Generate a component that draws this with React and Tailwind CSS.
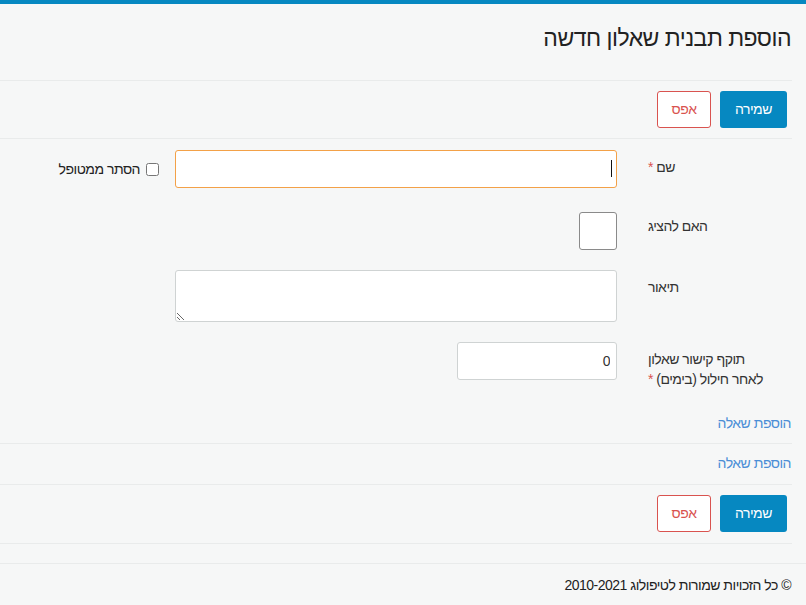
export default function App() {
  return (
    <div
      dir="rtl"
      className="min-h-screen bg-[#f6f7f7] text-[14px] tracking-[-0.5px] text-[#333]"
      style={{ fontFamily: '"Liberation Sans", Arial, sans-serif' }}
    >
      <div className="h-[4px] bg-[#0688c1]" />

      <div className="pr-[14px]">
        {/* header */}
        <div className="h-[76px] pt-[20px] pr-[1px]">
          <h1 className="text-[23px] leading-[28px] text-[#222]">הוספת תבנית שאלון חדשה</h1>
        </div>

        <div className="border-t border-[#e9ebeb] py-[10px] pr-[5px]">
          <div className="flex gap-[9px]">
            <button className="w-[67px] h-[37px] rounded-[3px] bg-[#0688c1] text-white text-[14px]">
              שמירה
            </button>
            <button className="w-[54px] h-[37px] rounded-[3px] border border-[#d9534f] bg-white text-[#d9534f] text-[14px]">
              אפס
            </button>
          </div>
        </div>

        {/* form */}
        <div className="border-t border-[#e9ebeb] pt-[11px]">
          {/* name */}
          <div className="flex">
            <label className="w-[175px] pl-[31px] pt-[7px] leading-[20px] text-left">
              שם <span className="text-[#d9534f]">*</span>
            </label>
            <div className="relative w-[442px]">
              <input
                type="text"
                className="w-full h-[38px] rounded-[3px] border border-[#f3a148] bg-white px-3 outline-none"
              />
              <div className="absolute right-[5px] top-[10px] w-[1px] h-[17px] bg-[#111]" />
            </div>
            <div className="flex items-center gap-[6px] pr-[16px] h-[38px]">
              <input type="checkbox" className="w-[13px] h-[13px] m-0" />
              <span className="text-[#222]">הסתר ממטופל</span>
            </div>
          </div>

          {/* show */}
          <div className="flex mt-[24px]">
            <label className="w-[175px] pl-[31px] pt-[4px] leading-[20px] text-left">האם להציג</label>
            <div className="w-[442px]">
              <div className="w-[38px] h-[38px] rounded-[3px] border border-[#8a8a8a] bg-white" />
            </div>
          </div>

          {/* description */}
          <div className="flex mt-[20px]">
            <label className="w-[175px] pl-[31px] pt-[7px] leading-[20px] text-left">תיאור</label>
            <div className="w-[442px] flex">
              <textarea className="w-full h-[52px] rounded-[3px] border border-[#cfd3d3] bg-white px-3 py-1 outline-none" />
            </div>
          </div>

          {/* validity */}
          <div className="flex mt-[20px]">
            <label className="w-[175px] pl-[31px] pt-[7px] leading-[20px] text-left">
              תוקף קישור שאלון
              <br />
              לאחר חילול (בימים) <span className="text-[#d9534f]">*</span>
            </label>
            <div className="w-[442px]">
              <input
                type="text"
                defaultValue="0"
                className="w-[160px] h-[38px] rounded-[3px] border border-[#cfd3d3] bg-white px-[6px] outline-none text-[#333]"
              />
            </div>
          </div>
        </div>

        <div className="pt-[24px] pb-[10px] pr-[1px] leading-[20px]">
          <a className="text-[#4a8ed6] cursor-pointer">הוספת שאלה</a>
        </div>
        <div className="border-t border-[#e9ebeb] pt-[9px] pb-[11px] pr-[1px] leading-[20px]">
          <a className="text-[#4a8ed6] cursor-pointer">הוספת שאלה</a>
        </div>

        <div className="border-t border-[#e9ebeb] pt-[10px] pb-[11px] pr-[5px]">
          <div className="flex gap-[9px]">
            <button className="w-[67px] h-[37px] rounded-[3px] bg-[#0688c1] text-white text-[14px]">
              שמירה
            </button>
            <button className="w-[54px] h-[37px] rounded-[3px] border border-[#d9534f] bg-white text-[#d9534f] text-[14px]">
              אפס
            </button>
          </div>
        </div>
        <div className="border-t border-[#e9ebeb] h-[20px]" />
      </div>

      <footer className="border-t border-[#e9ebeb] pt-[11px] pr-[15px] pb-[10px] leading-[20px] text-[#222]">
        © כל הזכויות שמורות לטיפולוג 2010-2021
      </footer>
    </div>
  );
}
